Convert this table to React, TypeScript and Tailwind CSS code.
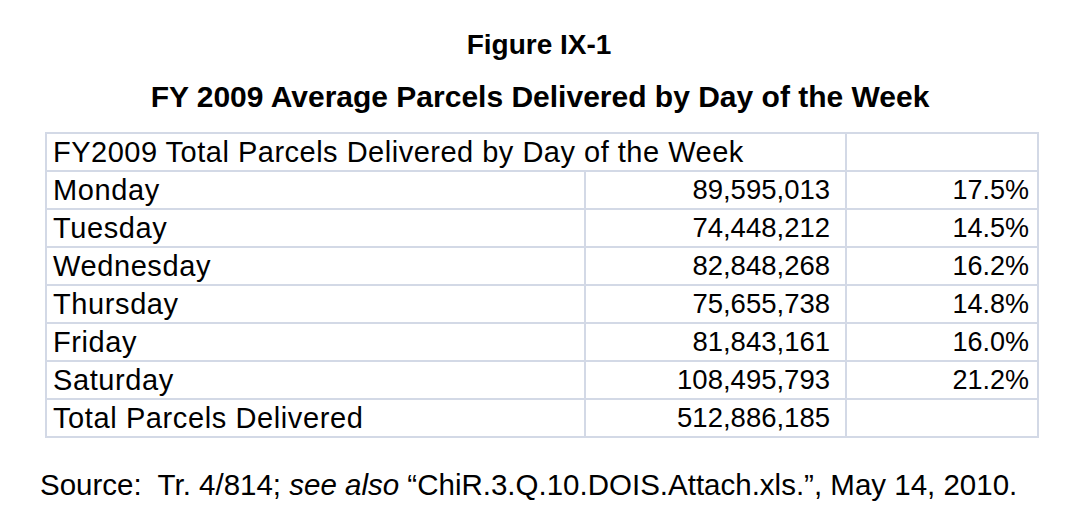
const rows = [
  ['Monday', '89,595,013', '17.5%'],
  ['Tuesday', '74,448,212', '14.5%'],
  ['Wednesday', '82,848,268', '16.2%'],
  ['Thursday', '75,655,738', '14.8%'],
  ['Friday', '81,843,161', '16.0%'],
  ['Saturday', '108,495,793', '21.2%'],
  ['Total Parcels Delivered', '512,886,185', ''],
]

export default function App() {
  return (
    <main className="w-[1072px] h-[520px] bg-white text-black font-['Liberation_Sans',Arial,sans-serif] pt-[27px]">
      <h1 className="text-center font-bold text-[28px] leading-[36px] pl-[6px]">Figure IX-1</h1>
      <h2 className="text-center font-bold text-[30px] leading-[36px] mt-[16px] pl-[8px]">
        FY 2009 Average Parcels Delivered by Day of the Week
      </h2>

      <table className="ml-[45px] mt-[17px] border-collapse leading-[34px] table-fixed w-[992px]">
        <colgroup>
          <col className="w-[539px]" />
          <col className="w-[261px]" />
          <col className="w-[192px]" />
        </colgroup>
        <tbody>
          <tr className="h-[38px]">
            <td colSpan={2} className="border-2 border-[#d3d9e6] pl-[6px] py-0 whitespace-nowrap text-[29px] tracking-[0.5px]">
              FY2009 Total Parcels Delivered by Day of the Week
            </td>
            <td className="border-2 border-[#d3d9e6]"></td>
          </tr>
          {rows.map(([day, count, pct]) => (
            <tr key={day} className="h-[38px]">
              <td className="border-2 border-[#d3d9e6] pl-[6px] py-0 whitespace-nowrap text-[29px] tracking-[0.6px]">{day}</td>
              <td className="border-2 border-[#d3d9e6] pr-[15px] py-0 text-right text-[27.5px]">{count}</td>
              <td className="border-2 border-[#d3d9e6] pr-[8px] py-0 text-right text-[27px]">{pct}</td>
            </tr>
          ))}
        </tbody>
      </table>

      <p className="mt-[29px] pl-[40px] text-[29.5px] leading-[36px] whitespace-nowrap">
        Source:&nbsp; Tr. 4/814; <em>see also</em> “ChiR.3.Q.10.DOIS.Attach.xls.”, May 14, 2010.
      </p>
    </main>
  )
}
